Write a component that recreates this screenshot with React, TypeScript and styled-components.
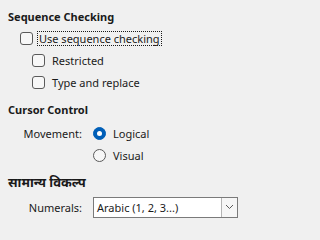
import React from 'react'
import styled, { createGlobalStyle } from 'styled-components'

const GlobalStyle = createGlobalStyle`
    html, body {
        margin: 0;
        padding: 0;
        background: #f0f0f0;
    }
    body {
        font-family: "Noto Sans", "Open Sans", sans-serif;
        font-size: 11px;
        color: #1a1a1a;
    }
`

const Page = styled.div`
    width: 247px;
    height: 227px;
    padding: 7px 0 0 8px;
    box-sizing: border-box;
    display: flex;
    flex-direction: column;
`
const Heading = styled.div<{ $gap?: number; $size?: number }>`
    height: 20px;
    line-height: 20px;
    margin-top: ${p => p.$gap ?? 0}px;
    font-size: ${p => p.$size ?? 11}px;
    font-weight: 700;
    white-space: nowrap;
`
const Row = styled.div<{ $indent?: number; $gap?: number }>`
    height: 22px;
    display: flex;
    align-items: center;
    padding-left: ${p => p.$indent ?? 0}px;
    margin-top: ${p => p.$gap ?? 0}px;
`
const Label = styled.div`
    width: 74px;
    text-align: right;
    margin-right: 11px;
    white-space: nowrap;
`
const Spacer = styled.div`
    width: 85px;
`
const Check = styled.span`
    width: 11px;
    height: 11px;
    border: 1px solid #5a5a5a;
    border-radius: 3px;
    background: #f7f7f7;
    flex: none;
`
const Radio = styled.span<{ $on?: boolean }>`
    width: 13px;
    height: 13px;
    border-radius: 50%;
    box-sizing: border-box;
    flex: none;
    display: flex;
    align-items: center;
    justify-content: center;
    background: ${p => (p.$on ? '#005fb8' : '#f7f7f7')};
    border: 1px solid ${p => (p.$on ? '#005fb8' : '#5a5a5a')};
    &::after {
        content: '';
        display: ${p => (p.$on ? 'block' : 'none')};
        width: 5px;
        height: 5px;
        border-radius: 50%;
        background: #ffffff;
    }
`
const OptionText = styled.span<{ $focus?: boolean }>`
    margin-left: ${p => (p.$focus ? 4 : 5)}px;
    padding: 0 1px;
    line-height: 13px;
    white-space: nowrap;
    border: 1px dotted ${p => (p.$focus ? '#1a1a1a' : 'transparent')};
`
const Select = styled.div`
    width: 145px;
    height: 21px;
    box-sizing: border-box;
    border: 1px solid #7a7a7a;
    background: #ffffff;
    display: flex;
    align-items: stretch;
`
const SelectValue = styled.div`
    flex: 1;
    padding-left: 3px;
    line-height: 19px;
    white-space: nowrap;
`
const SelectButton = styled.div`
    width: 15px;
    border-left: 1px solid #b4b4b4;
    background: #f6f6f6;
    display: flex;
    align-items: center;
    justify-content: center;
`

const Chevron = () => (
    <svg width="9" height="6" viewBox="0 0 9 6">
        <path d="M1 1 L4.5 4.5 L8 1" fill="none" stroke="#5a5a5a" strokeWidth="1" />
    </svg>
)

const App = () => {
    return (
        <>
            <GlobalStyle />
            <Page>
                <Heading>Sequence Checking</Heading>
                <Row $indent={12}>
                    <Check />
                    <OptionText $focus>Use sequence checking</OptionText>
                </Row>
                <Row $indent={24}>
                    <Check />
                    <OptionText>Restricted</OptionText>
                </Row>
                <Row $indent={24}>
                    <Check />
                    <OptionText>Type and replace</OptionText>
                </Row>

                <Heading $gap={7}>Cursor Control</Heading>
                <Row $gap={2}>
                    <Label>Movement:</Label>
                    <Radio $on />
                    <OptionText>Logical</OptionText>
                </Row>
                <Row>
                    <Spacer />
                    <Radio />
                    <OptionText>Visual</OptionText>
                </Row>

                <Heading $gap={6} $size={13}>सामान्य विकल्प</Heading>
                <Row $gap={4}>
                    <Label>Numerals:</Label>
                    <Select>
                        <SelectValue>Arabic (1, 2, 3...)</SelectValue>
                        <SelectButton>
                            <Chevron />
                        </SelectButton>
                    </Select>
                </Row>
            </Page>
        </>
    )
}

export default App
